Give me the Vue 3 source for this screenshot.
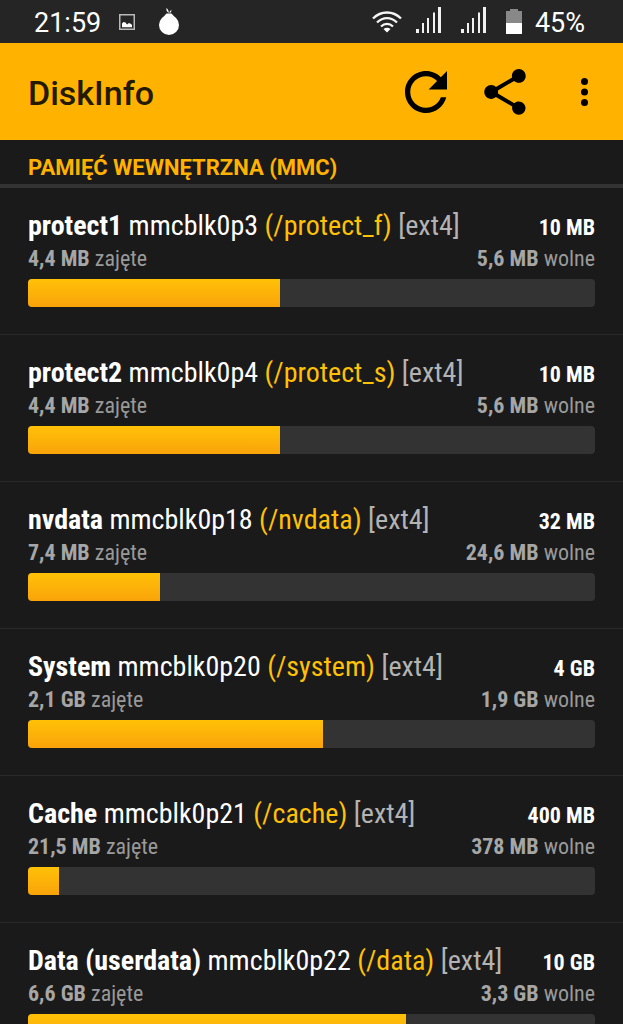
<script setup>
const partitions = [
  { name: 'protect1', device: 'mmcblk0p3', mount: '/protect_f', total: '10 MB', used: '4,4 MB', free: '5,6 MB', percent: 44.4 },
  { name: 'protect2', device: 'mmcblk0p4', mount: '/protect_s', total: '10 MB', used: '4,4 MB', free: '5,6 MB', percent: 44.4 },
  { name: 'nvdata', device: 'mmcblk0p18', mount: '/nvdata', total: '32 MB', used: '7,4 MB', free: '24,6 MB', percent: 23.2 },
  { name: 'System', device: 'mmcblk0p20', mount: '/system', total: '4 GB', used: '2,1 GB', free: '1,9 GB', percent: 52 },
  { name: 'Cache', device: 'mmcblk0p21', mount: '/cache', total: '400 MB', used: '21,5 MB', free: '378 MB', percent: 5.5 },
  { name: 'Data (userdata)', device: 'mmcblk0p22', mount: '/data', total: '10 GB', used: '6,6 GB', free: '3,3 GB', percent: 66.7 },
]
</script>

<template>
  <div class="app">
    <div class="status">
      <span class="label">21:59</span>
      <svg class="picture" width="16" height="16" viewBox="0 0 16 16" aria-hidden="true">
        <rect x="0.75" y="0.75" width="14.5" height="14.5" fill="none" stroke="#b8b8b8" stroke-width="1.5" />
        <path d="M3 13.300V9.500L4.500 8L6.500 8.500L8 10.500L10 9L12 10L13 11V13.300Z" fill="#fff" />
      </svg>
      <svg class="fruit" width="22" height="28" viewBox="0 0 22 28" aria-hidden="true">
        <circle cx="11" cy="17" r="10" fill="#fff" />
        <path d="M4 10.500L8.500 5.500H13.500L18 10.500Z" fill="#fff" />
        <path d="M8.500 0C10 1 10.800 3 10.800 5C9 4 8 2 8.500 0ZM13.500 1.500L11 4.500H13Z" fill="#fff" />
      </svg>
      <div class="signals">
        <svg class="wifi" width="30" height="24" viewBox="0 0 30 24" fill="none" stroke="#f5f5f5" stroke-width="2.300" aria-hidden="true">
          <path d="M1 8.500C9 .5 21 .5 29 8.500M5 12.500C11 6.700 19 6.700 25 12.500M9 16.500C12.500 13 17.500 13 21 16.500" />
          <path d="M11.500 19Q15 16.500 18.500 19L15 22.500Z" fill="#fff" stroke="none" />
        </svg>
        <svg v-for="n in 2" :key="n" class="bars" width="26" height="27" viewBox="0 0 26 27" fill="#f2f2f2" aria-hidden="true">
          <path d="M0 23H3V27H0ZM6 17H8V27H6ZM11 12H13V27H11ZM17 6.500H19V27H17ZM22 1H25V27H22Z" />
        </svg>
        <svg class="battery" width="18" height="26" viewBox="0 0 18 26" aria-hidden="true">
          <path d="M1 3H5V1H13V3H17V15H1Z" fill="#888" />
          <path d="M1 15H17V26H1Z" fill="#fff" />
        </svg>
        <span class="label">45%</span>
      </div>
    </div>

    <header class="toolbar">
      <h1>DiskInfo</h1>
      <div class="actions">
        <button type="button" aria-label="Odśwież">
          <svg width="42" height="42" viewBox="4 4 16 16" aria-hidden="true">
            <path d="M17.650 6.350C16.200 4.900 14.210 4 12 4c-4.420 0-7.990 3.580-7.990 8s3.570 8 7.990 8c3.730 0 6.840-2.550 7.730-6h-2.080c-.82 2.330-3.040 4-5.650 4-3.310 0-6-2.690-6-6s2.690-6 6-6c1.660 0 3.140.69 4.220 1.780L13 11h7V4l-2.350 2.350z" />
          </svg>
        </button>
        <button type="button" aria-label="Udostępnij">
          <svg width="42" height="46" viewBox="3 2 18 20" aria-hidden="true">
            <path d="M18 16.080c-.76 0-1.440.3-1.960.77L8.910 12.700c.05-.23.09-.46.09-.7s-.04-.47-.09-.7l7.050-4.110c.54.5 1.250.81 2.040.81 1.660 0 3-1.340 3-3s-1.340-3-3-3-3 1.340-3 3c0 .24.04.47.09.7L8.040 9.810C7.500 9.310 6.790 9 6 9c-1.660 0-3 1.340-3 3s1.340 3 3 3c.79 0 1.500-.31 2.040-.81l7.120 4.160c-.05.21-.08.43-.08.65 0 1.610 1.310 2.920 2.920 2.920s2.920-1.310 2.920-2.920-1.310-2.920-2.920-2.920z" />
          </svg>
        </button>
        <button type="button" class="more" aria-label="Więcej opcji">
          <svg width="7" height="28" viewBox="10 4 4 16" aria-hidden="true">
            <circle cx="12" cy="6" r="2" /><circle cx="12" cy="12" r="2" /><circle cx="12" cy="18" r="2" />
          </svg>
        </button>
      </div>
    </header>

    <main>
      <h2>PAMIĘĆ WEWNĘTRZNA (MMC)</h2>
      <ul>
        <li v-for="p in partitions" :key="p.device">
          <div class="title">
            <span><b>{{ p.name }}</b> {{ p.device }} <span class="mount">({{ p.mount }})</span> <span class="fs">[ext4]</span></span>
            <b class="total">{{ p.total }}</b>
          </div>
          <div class="usage">
            <span><b>{{ p.used }}</b> zajęte</span>
            <span><b>{{ p.free }}</b> wolne</span>
          </div>
          <div class="track" role="meter" :aria-label="p.name" :aria-valuenow="p.percent" aria-valuemin="0" aria-valuemax="100">
            <div class="fill" :style="{ width: p.percent + '%' }"></div>
          </div>
        </li>
      </ul>
    </main>
  </div>
</template>

<style>
body {
  margin: 0;
  background: #1a1a1a;
}
</style>

<style scoped>
.app {
  height: 100vh;
  overflow: hidden;
  background: #1a1a1a;
  color: #fff;
  font-family: "Roboto Condensed", "Liberation Sans Narrow", Roboto, sans-serif;
}
.status {
  display: flex;
  align-items: center;
  height: 43px;
  padding: 0 38px 0 34px;
  box-sizing: border-box;
  background: #252525;
  font: 27px/40px Roboto, sans-serif;
}
.label {
  padding-top: 2px;
}
.picture {
  margin-left: 18px;
}
.fruit {
  margin-left: 23px;
}
.signals {
  display: flex;
  align-items: center;
  margin-left: auto;
}
.wifi {
  margin-right: 2px;
}
.bars {
  margin: 0 7px 4px 12px;
}
.battery {
  margin: 0 12px 1px 11px;
}
.toolbar {
  display: flex;
  align-items: center;
  justify-content: space-between;
  height: 97px;
  padding: 0 35px 0 28px;
  box-sizing: border-box;
  background: #ffb300;
}
h1 {
  margin: 0;
  padding-top: 3px;
  color: #241a00;
  font: 500 34px/44px Roboto, sans-serif;
}
.actions {
  display: flex;
  align-items: center;
  gap: 37px;
}
button {
  display: flex;
  padding: 0;
  border: 0;
  background: none;
  cursor: pointer;
}
.more {
  margin-left: 18px;
}
h2 {
  margin: 0;
  padding: 14px 28px 2px;
  border-bottom: 4px solid #333;
  color: #ffb300;
  font: 700 22px/28px Roboto, sans-serif;
}
ul {
  margin: 0;
  padding: 0;
  list-style: none;
}
li {
  padding: 19px 28px 27px;
  border-bottom: 1px solid #2a2a2a;
}
.title,
.usage {
  display: flex;
  justify-content: space-between;
  align-items: baseline;
  white-space: nowrap;
}
.title {
  font-size: 28px;
  line-height: 38px;
}
.mount {
  color: #ffc107;
}
.fs {
  color: #b3b3b3;
}
.total {
  font-size: 22px;
  line-height: 28px;
}
.usage {
  color: #999;
  font-size: 22px;
  line-height: 28px;
}
.usage b {
  color: #a6a6a6;
}
.track {
  height: 28px;
  margin-top: 6px;
  overflow: hidden;
  border-radius: 4px;
  background: #333;
}
.fill {
  height: 100%;
  background: linear-gradient(#ffc107, #f9a30a);
}
</style>
